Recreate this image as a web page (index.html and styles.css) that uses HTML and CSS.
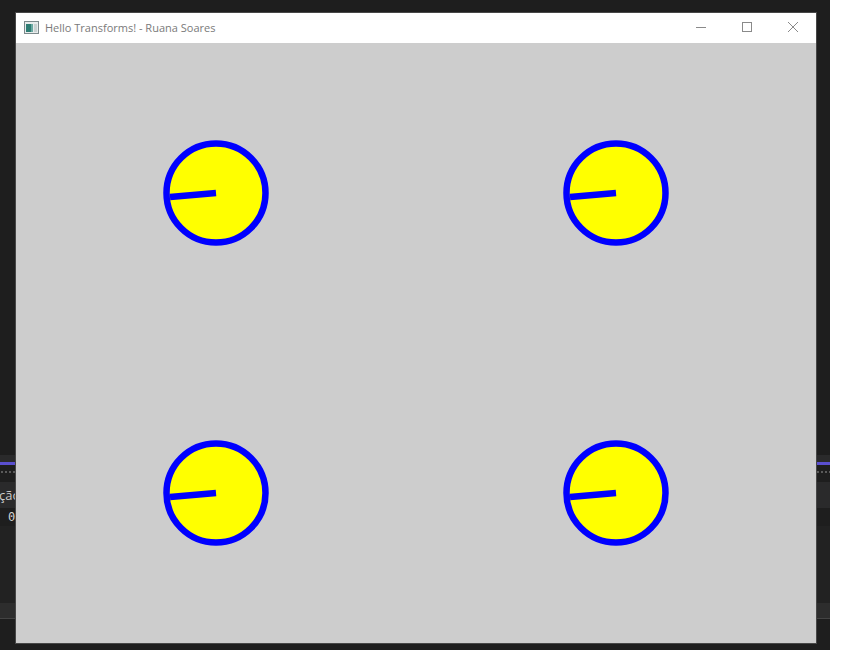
FILE: index.html
```html
<!DOCTYPE html>
<html>
<head>
<meta charset="utf-8">
<link rel="stylesheet" href="styles.css">
</head>
<body>
<div class="desktop">
  <div class="gap-top"></div>
  <div class="band-a"></div>
  <div class="purple"></div>
  <div class="dots"></div>
  <div class="tab-row"><span class="tab-text">ção</span></div>
  <div class="num-row"><span class="num">0</span></div>
  <div class="panel"></div>
  <div class="band-b"></div>
  <div class="line-b"></div>

  <div class="window">
    <div class="titlebar">
      <svg class="app-icon" width="15" height="13" viewBox="0 0 15 13">
        <rect x="0.5" y="0.5" width="14" height="12" fill="#e8ecec" stroke="#7d8a8c"/>
        <rect x="2" y="3" width="5" height="8" fill="#2f7d74"/>
        <rect x="7" y="3" width="2" height="8" fill="#6aa9a2"/>
        <rect x="10" y="3" width="3" height="8" fill="#c9d2d2"/>
      </svg>
      <span class="title">Hello Transforms! - Ruana Soares</span>
      <div class="controls">
        <svg class="ctl" width="46" height="30" viewBox="0 0 46 30"><line x1="18" y1="14.5" x2="28" y2="14.5" stroke="#8a8a8a" stroke-width="1"/></svg>
        <svg class="ctl" width="46" height="30" viewBox="0 0 46 30"><rect x="18.5" y="9.5" width="9" height="9" fill="none" stroke="#8a8a8a" stroke-width="1"/></svg>
        <svg class="ctl" width="46" height="30" viewBox="0 0 46 30"><path d="M18 9 L28 19 M28 9 L18 19" stroke="#8a8a8a" stroke-width="1" fill="none"/></svg>
      </div>
    </div>
    <svg class="canvas" width="800" height="600" viewBox="0 0 800 600">
      <g>
        <circle cx="200" cy="150" r="49.5" fill="#ffff00" stroke="#0000ff" stroke-width="6.5"/>
        <line x1="200" y1="150" x2="154" y2="154" stroke="#0000ff" stroke-width="6.5"/>
      </g>
      <g>
        <circle cx="600" cy="150" r="49.5" fill="#ffff00" stroke="#0000ff" stroke-width="6.5"/>
        <line x1="600" y1="150" x2="554" y2="154" stroke="#0000ff" stroke-width="6.5"/>
      </g>
      <g>
        <circle cx="200" cy="450" r="49.5" fill="#ffff00" stroke="#0000ff" stroke-width="6.5"/>
        <line x1="200" y1="450" x2="154" y2="454" stroke="#0000ff" stroke-width="6.5"/>
      </g>
      <g>
        <circle cx="600" cy="450" r="49.5" fill="#ffff00" stroke="#0000ff" stroke-width="6.5"/>
        <line x1="600" y1="450" x2="554" y2="454" stroke="#0000ff" stroke-width="6.5"/>
      </g>
    </svg>
  </div>
</div>
</body>
</html>
```
FILE: styles.css
```css
html, body {
  margin: 0;
  padding: 0;
  background: #ffffff;
}
body {
  width: 851px;
  height: 650px;
  overflow: hidden;
  font-family: "Open Sans", "Noto Sans", sans-serif;
}
.desktop {
  position: relative;
  width: 830px;
  height: 650px;
  background: #1e1e1e;
  display: flex;
  flex-direction: column;
}
.gap-top { height: 455px; flex: none; }
.band-a { height: 7px; background: #2a2a2b; flex: none; }
.purple { height: 3px; background: #5a4fcf; flex: none; }
.dots {
  height: 17px;
  flex: none;
  background-image: radial-gradient(circle, #5a5a5a 0.8px, transparent 1px);
  background-size: 4px 4px;
  background-position: 0 5px;
  background-repeat: repeat-x;
}
.tab-row {
  height: 26px;
  flex: none;
  background: #2a2a2b;
  display: flex;
  align-items: center;
}
.tab-text {
  font-family: "Open Sans", "Noto Sans", sans-serif;
  font-size: 13px;
  color: #cccccc;
  margin-left: -1px;
}
.num-row {
  height: 18px;
  flex: none;
  display: flex;
  align-items: center;
}
.num {
  font-family: "DejaVu Sans Mono", monospace;
  font-size: 12px;
  color: #d4d4d4;
  margin-left: 8px;
}
.panel { height: 77px; background: #222222; flex: none; }
.band-b { height: 15px; background: #2d2d2d; flex: none; }
.line-b { height: 1px; background: #444444; flex: none; }

.window {
  position: absolute;
  left: 15px;
  top: 12px;
  width: 800px;
  border: 1px solid #474747;
  display: flex;
  flex-direction: column;
}
.titlebar {
  height: 30px;
  background: #ffffff;
  display: flex;
  align-items: center;
}
.app-icon {
  margin-left: 8px;
  margin-top: -2px;
}
.title {
  margin-left: 6px;
  font-size: 11px;
  color: #7a7a7a;
  margin-top: -1px;
}
.controls {
  margin-left: auto;
  display: flex;
  margin-right: 0;
}
.ctl { display: block; }
.canvas {
  display: block;
  background: #cdcdcd;
}
```
